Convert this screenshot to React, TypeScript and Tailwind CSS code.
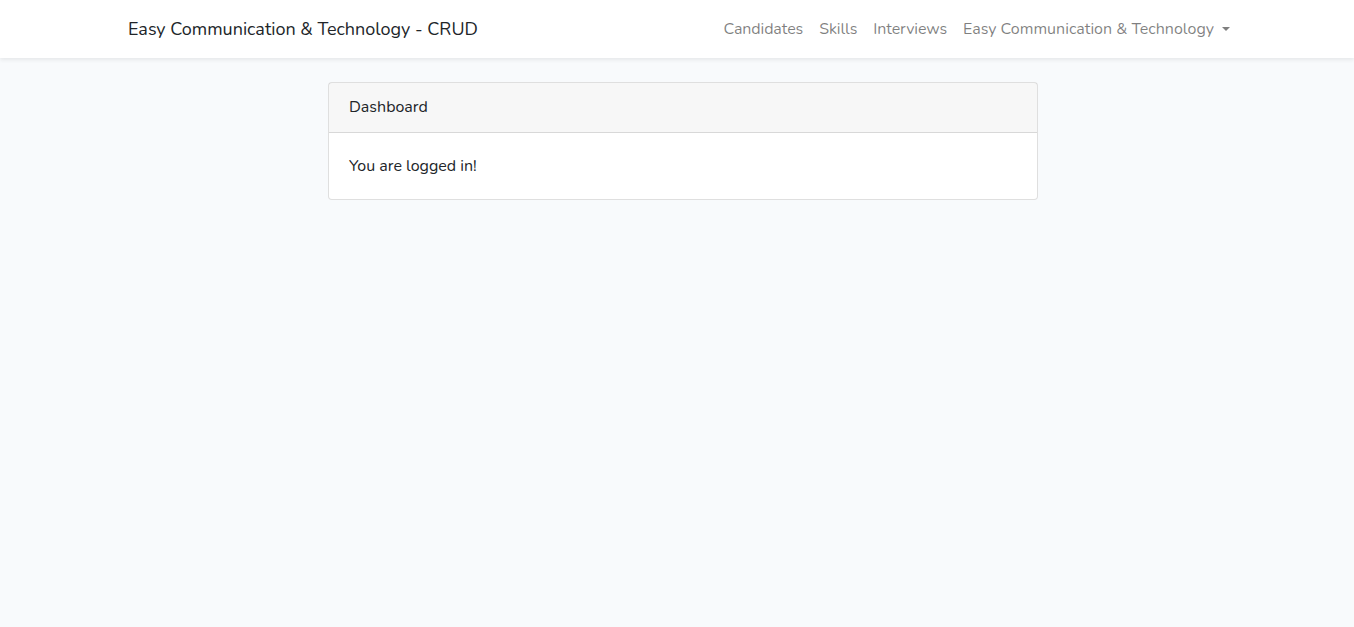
export default function App() {
    const links = ["Candidates", "Skills", "Interviews"];

    return (
        <div className="min-h-screen bg-[#f8fafc] text-[#212529] font-['Nunito','Lato','Noto_Sans',sans-serif]">
            <nav className="bg-white shadow-[0_2px_4px_rgba(0,0,0,0.075)] h-[58px]">
                <div className="h-full flex items-center justify-between pl-[128px] pr-[116px]">
                    <a className="text-[18px] text-[#212529] leading-none">Easy Communication &amp; Technology - CRUD</a>
                    <ul className="flex items-center text-[16px] text-black/50">
                        {links.map(link =>
                            <li key={link} className="px-2 tracking-[-0.1px]">{link}</li>
                        )}
                        <li className="px-2 flex items-center">
                            Easy Communication &amp; Technology
                            <span className="ml-[8px] inline-block w-0 h-0 border-x-[4px] border-x-transparent border-t-[4px] border-t-black/50"></span>
                        </li>
                    </ul>
                </div>
            </nav>

            <main className="pt-6 flex justify-center">
                <div className="w-[710px] ml-[12px] bg-white border border-black/[0.125] rounded-[4px] text-[16px]">
                    <div className="h-[50px] px-5 pb-[2px] flex items-center bg-black/[0.03] border-b border-black/[0.125]">
                        Dashboard
                    </div>
                    <div className="h-[66px] px-5 flex items-center">
                        You are logged in!
                    </div>
                </div>
            </main>
        </div>
    );
}
